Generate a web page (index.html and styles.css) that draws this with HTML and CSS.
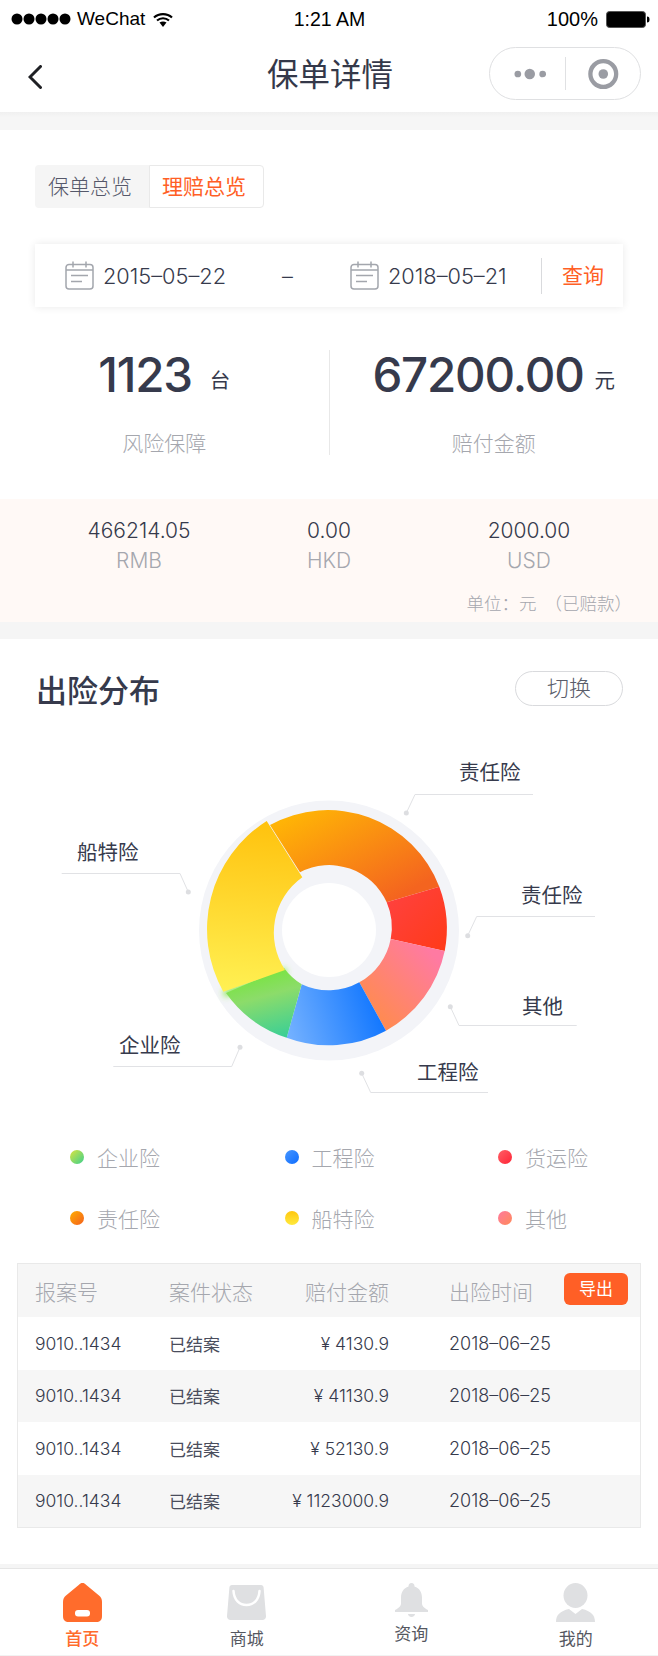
FILE: index.html
```html
<!DOCTYPE html>
<html lang="zh-CN">
<head>
	<meta charset="utf-8">
	<title>保单详情</title>
	<link rel="stylesheet" href="styles.css">
</head>
<body>

	<div class="status">
		<div class="status-left">
			<svg class="signal" width="60" height="12" viewBox="0 0 60 12"><circle cx="6" cy="6" r="5.5"/><circle cx="18" cy="6" r="5.5"/><circle cx="30" cy="6" r="5.5"/><circle cx="42" cy="6" r="5.5"/><circle cx="54" cy="6" r="5.5"/></svg>
			<span>WeChat</span>
			<svg class="wifi" width="20" height="15" viewBox="0 0 20 15"><path d="M1 5.5C6 1 14 1 19 5.5M4 8.5C7.500 5.500 12.500 5.500 16 8.500" fill="none" stroke="#000" stroke-width="2.200"/><path d="M6.500 10.500C8.500 9 11.500 9 13.500 10.500L10 15Z"/></svg>
		</div>
		<div class="status-time">1:21 AM</div>
		<div class="status-right">
			<span>100%</span>
			<svg width="44" height="17" viewBox="0 0 44 17"><rect x="0.500" y="0.500" width="39" height="16" rx="3" fill="#000" stroke="#555"/><path d="M41 5.500c2 0 2.500 1 2.500 3s-.5 3-2.500 3z"/></svg>
		</div>
	</div>

	<div class="nav">
		<svg class="back" width="14" height="24" viewBox="0 0 14 24"><path d="M12.500 1.500L2 12l10.500 10.500" fill="none" stroke="#1f2024" stroke-width="3" stroke-linecap="round"/></svg>
		<div class="nav-title">保单详情</div>
		<div class="capsule">
			<svg width="34" height="12" viewBox="0 0 34 12"><circle cx="4" cy="6" r="3.500"/><circle cx="16.500" cy="6" r="5.500"/><circle cx="30" cy="6" r="3.500"/></svg>
			<i class="capsule-line"></i>
			<svg width="32" height="32" viewBox="0 0 32 32"><circle cx="16" cy="16" r="13.500" fill="none" stroke="#9a9ca3" stroke-width="4.500"/><circle cx="16" cy="16" r="5"/></svg>
		</div>
	</div>

	<div class="gap gap-top"></div>

	<div class="overview">
		<div class="tabs">
			<div class="tab">保单总览</div>
			<div class="tab tab-on">理赔总览</div>
		</div>

		<div class="date-card">
			<div class="date-item date-from">
				<svg class="cal" width="29" height="29" viewBox="0 0 29 29"><use href="#calendar"/></svg>
				<span>2015–05–22</span>
			</div>
			<div class="date-dash">–</div>
			<div class="date-item date-to">
				<svg class="cal" width="29" height="29" viewBox="0 0 29 29"><use href="#calendar"/></svg>
				<span>2018–05–21</span>
			</div>
			<div class="date-query"><span>查询</span></div>
		</div>

		<div class="stats">
			<div class="stat stat-left">
				<div class="stat-num"><b>1123</b><span>台</span></div>
				<div class="stat-label">风险保障</div>
			</div>
			<div class="stat stat-right">
				<div class="stat-num"><b>67200.00</b><span>元</span></div>
				<div class="stat-label">赔付金额</div>
			</div>
		</div>
	</div>

	<div class="band">
		<div class="band-grid">
			<div class="band-cell"><div class="band-val">466214.05</div><div class="band-cur">RMB</div></div>
			<div class="band-cell"><div class="band-val">0.00</div><div class="band-cur">HKD</div></div>
			<div class="band-cell"><div class="band-val">2000.00</div><div class="band-cur">USD</div></div>
		</div>
		<div class="band-unit"><span>单位：元</span><span>（已赔款）</span></div>
	</div>

	<div class="gap gap-mid"></div>

	<div class="section-head">
		<h2>出险分布</h2>
		<div class="switch">切换</div>
	</div>

	<div class="chart">
		<svg class="pie" width="658" height="433" viewBox="0 706 658 433">
			<defs>
				<linearGradient id="gOrange" x1="0" y1="0" x2="1" y2="1"><stop offset="0.100" stop-color="#ffb306"/><stop offset="0.850" stop-color="#f4641f"/></linearGradient>
				<linearGradient id="gRed" x1="0" y1="0" x2="1" y2="1"><stop offset="0" stop-color="#ff4242"/><stop offset="1" stop-color="#ff3a18"/></linearGradient>
				<linearGradient id="gPink" x1="0" y1="1" x2="1" y2="0"><stop offset="0.200" stop-color="#ff8a54"/><stop offset="0.850" stop-color="#ff7aa2"/></linearGradient>
				<linearGradient id="gBlue" x1="0" y1="0.700" x2="1" y2="0.500"><stop offset="0" stop-color="#72b0ff"/><stop offset="1" stop-color="#0d74ff"/></linearGradient>
				<linearGradient id="gGreen" x1="0.400" y1="0" x2="0.700" y2="1"><stop offset="0" stop-color="#74e636"/><stop offset="0.400" stop-color="#8cdc6a"/><stop offset="1" stop-color="#3ccf95"/></linearGradient>
				<linearGradient id="gYellow" x1="0.500" y1="0" x2="0.450" y2="1"><stop offset="0" stop-color="#ffc20e"/><stop offset="1" stop-color="#fff052"/></linearGradient>
				<filter id="glow" x="-30%" y="-60%" width="160%" height="220%"><feGaussianBlur stdDeviation="3"/></filter>
				<symbol id="calendar" viewBox="0 0 29 29">
					<rect x="1" y="3.500" width="27" height="24.500" rx="3" fill="none" stroke="#a3a6ad" stroke-width="1.500"/>
					<path d="M8 0.500v6M21 0.500v6M1 9h27M6 14.500h17M6 20.500h11" fill="none" stroke="#a3a6ad" stroke-width="1.500"/>
				</symbol>
			</defs>

			<circle cx="329" cy="930.500" r="130" fill="#f3f4f8"/>
			<path d="M224 994L286 971" fill="none" stroke="#7be83a" stroke-width="6" filter="url(#glow)"/>
			<path d="M270 825A119.500 119.500 0 0 1 439.300 886.700L386.700 902.300A63 63 0 0 0 300 872.300Z" fill="url(#gOrange)"/>
			<path d="M439.300 886.700A119.500 119.500 0 0 1 444.700 951L390.700 939A63 63 0 0 0 386.700 902.300Z" fill="url(#gRed)"/>
			<path d="M444.700 951A119.500 119.500 0 0 1 386 1030.700L359.300 982.300A63 63 0 0 0 390.700 939Z" fill="url(#gPink)"/>
			<path d="M386 1030.700A119.500 119.500 0 0 1 286.700 1037.700L301.700 984.300A63 63 0 0 0 359.300 982.300Z" fill="url(#gBlue)"/>
			<path d="M286.700 1037.700A119.500 119.500 0 0 1 226 993L284 968A63 63 0 0 0 301.700 984.300Z" fill="url(#gGreen)"/>
			<path d="M223.300 991.700A128 128 0 0 1 266.700 821L302.300 877.300A68 68 0 0 0 285 970Z" fill="url(#gYellow)"/>
			<circle cx="329" cy="930" r="47" fill="#fff"/>

			<g fill="none" stroke="#e1e2e5" stroke-width="1">
				<path d="M533 794.500H415L406.300 813"/>
				<path d="M595 916.500H476.700L467.700 935.700"/>
				<path d="M576.700 1025.500H459L450.300 1006.700"/>
				<path d="M488 1092.500H370.700L361.700 1073.300"/>
				<path d="M61.700 873.500H180L188.300 892"/>
				<path d="M113.300 1066.500H231.700L240 1047.300"/>
			</g>
			<g fill="#dddee1">
				<circle cx="406.300" cy="813" r="2.500"/>
				<circle cx="467.700" cy="935.700" r="2.500"/>
				<circle cx="450.300" cy="1006.700" r="2.500"/>
				<circle cx="361.700" cy="1073.300" r="2.500"/>
				<circle cx="188.300" cy="892" r="2.500"/>
				<circle cx="240" cy="1047.300" r="2.500"/>
			</g>
		</svg>
		<span class="pin pin-a">责任险</span>
		<span class="pin pin-b">责任险</span>
		<span class="pin pin-c">其他</span>
		<span class="pin pin-d">工程险</span>
		<span class="pin pin-e">船特险</span>
		<span class="pin pin-f">企业险</span>
	</div>

	<div class="legend">
		<div class="legend-item"><i class="dot dot-green"></i>企业险</div>
		<div class="legend-item"><i class="dot dot-blue"></i>工程险</div>
		<div class="legend-item"><i class="dot dot-red"></i>货运险</div>
		<div class="legend-item"><i class="dot dot-orange"></i>责任险</div>
		<div class="legend-item"><i class="dot dot-yellow"></i>船特险</div>
		<div class="legend-item"><i class="dot dot-pink"></i>其他</div>
	</div>

	<div class="table">
		<div class="row row-head">
			<div>报案号</div>
			<div>案件状态</div>
			<div class="money">赔付金额</div>
			<div class="when">出险时间<span class="export">导出</span></div>
		</div>
		<div class="row">
			<div class="no">9010..1434</div>
			<div class="state">已结案</div>
			<div class="money amount">¥ 4130.9</div>
			<div class="when">2018–06–25</div>
		</div>
		<div class="row row-alt">
			<div class="no">9010..1434</div>
			<div class="state">已结案</div>
			<div class="money amount">¥ 41130.9</div>
			<div class="when">2018–06–25</div>
		</div>
		<div class="row">
			<div class="no">9010..1434</div>
			<div class="state">已结案</div>
			<div class="money amount">¥ 52130.9</div>
			<div class="when">2018–06–25</div>
		</div>
		<div class="row row-alt">
			<div class="no">9010..1434</div>
			<div class="state">已结案</div>
			<div class="money amount">¥ 1123000.9</div>
			<div class="when">2018–06–25</div>
		</div>
	</div>

	<div class="gap gap-bottom"></div>

	<div class="tabbar">
		<div class="tabbar-item tabbar-on">
			<svg width="39" height="39" viewBox="0 0 39 39"><path d="M19.500 0c1.500 0 2.500.7 3.500 1.700L36 12.500c2 1.700 3 3.500 3 6.500v14c0 4-2 6-6 6H6c-4 0-6-2-6-6V19c0-3 1-4.800 3-6.500L16 1.700C17 .7 18 0 19.500 0z" fill="#ff6c2c"/><rect x="12" y="27" width="15" height="6.500" rx="3" fill="#fff"/></svg>
			<span>首页</span>
		</div>
		<div class="tabbar-item tabbar-shop">
			<svg width="39" height="35" viewBox="0 0 39 35"><path d="M5 0h29c1.500 0 2.500 1 2.600 2.500L39 31c.1 2.500-1.400 4-3.500 4h-32C1.400 35-.1 33.500 0 31L2.400 2.500C2.500 1 3.500 0 5 0z" fill="#dfe0e2"/><path d="M6.500 6c.5 9 6 14 13 14s12.500-5 13-14" fill="none" stroke="#fff" stroke-width="2.500" stroke-linecap="round"/></svg>
			<span>商城</span>
		</div>
		<div class="tabbar-item">
			<svg width="33" height="34" viewBox="0 0 33 34"><path d="M16.500 0c2 0 3 1.500 3 3.500 5 1.500 7.500 6 7.500 11v6c0 3 3 5 6 6.500v2H0v-2c3-1.500 6-3.500 6-6.500v-6c0-5 2.500-9.500 7.500-11 0-2 1-3.500 3-3.500z" fill="#dfe0e2"/><path d="M13 31h7c0 1.500-1.500 3-3.500 3S13 32.500 13 31z" fill="#dfe0e2"/></svg>
			<span>资询</span>
		</div>
		<div class="tabbar-item">
			<svg width="39" height="39" viewBox="0 0 39 39"><ellipse cx="19.500" cy="12.500" rx="12" ry="12.500" fill="#dfe0e2"/><path d="M0 39c0-7 4-11 13-13l6.500 5 6.500-5c9 2 13 6 13 13z" fill="#dfe0e2"/></svg>
			<span>我的</span>
		</div>
	</div>

</body>
</html>
```

FILE: styles.css
```css
* {
	box-sizing: border-box;
}

html {
	overflow-x: hidden;
}

body {
	margin: 0;
	padding: 0;
	width: 658px;
	background: #fff;
	color: #363a4c;
	font-family: Inter, "Noto Sans CJK SC", sans-serif;
	font-size: 20.5px;
	font-weight: 300;
}

.gap {
	background: #f5f5f5;
}
.gap-top {
	height: 18px;
	background: linear-gradient(#f0f0f0, #f6f6f6 30%);
}
.gap-mid {
	height: 17px;
}
.gap-bottom {
	height: 5px;
	margin-top: 36px;
	border-bottom: 1px solid #e6e6e6;
}

/* status bar */
.status {
	display: grid;
	grid-template-columns: 1fr auto 1fr;
	align-items: center;
	height: 40px;
	padding: 0 8px 2px 11px;
	color: #000;
	font-family: "Liberation Sans", sans-serif;
	font-size: 19px;
	font-weight: 400;
}
.status-left {
	display: flex;
	align-items: center;
}
.signal {
	margin-right: 6px;
}
.wifi {
	margin-left: 8px;
}
.status-time {
	font-size: 19.5px;
	margin-left: -2px;
}
.status-right {
	display: flex;
	justify-content: flex-end;
	align-items: center;
	gap: 8px;
	font-size: 20px;
}

/* nav */
.nav {
	display: grid;
	grid-template-columns: 1fr auto 1fr;
	align-items: center;
	height: 72px;
	padding: 0 17px 0 19px;
}
.back {
	margin-left: 9px;
	margin-top: 1px;
}
.nav-title {
	margin-top: -2px;
	font-size: 31.5px;
	line-height: 38px;
	font-weight: 400;
	color: #343849;
}
.capsule {
	justify-self: end;
	display: flex;
	align-items: center;
	width: 152px;
	height: 53px;
	padding: 0 21px 0 24px;
	border: 1px solid #dfe0e2;
	border-radius: 27px;
	margin-top: -5px;
	fill: #9a9ca3;
}
.capsule-line {
	width: 1px;
	height: 33px;
	margin: 0 22px 0 19px;
	background: #e0e1e3;
}

/* overview */
.overview {
	padding: 35px 35px 44px;
}
.tabs {
	display: flex;
	width: 229px;
	height: 43px;
}
.tab {
	width: 114px;
	padding-left: 13px;
	line-height: 43px;
	font-size: 21px;
	color: #55586a;
	background: #f5f5f5;
	border-radius: 4px 0 0 4px;
}
.tab-on {
	width: 115px;
	padding-left: 12px;
	line-height: 41px;
	font-weight: 400;
	color: #ff5f26;
	background: #fff;
	border: 1px solid #e9e9e9;
	border-radius: 0 4px 4px 0;
}

.date-card {
	display: flex;
	align-items: center;
	height: 63px;
	margin-top: 36px;
	padding-left: 30px;
	background: #fff;
	box-shadow: 0 0 8px rgba(0, 0, 0, .09);
	font-size: 21.75px;
}
.date-item {
	display: flex;
	align-items: center;
	gap: 9px;
}
.date-from {
	width: 217px;
}
.date-to {
	width: 191px;
}
.date-dash {
	width: 68px;
}
.date-query {
	flex: 1;
	height: 36px;
	padding-left: 20px;
	line-height: 36px;
	font-weight: 400;
	color: #ff5f26;
	font-size: 21px;
	border-left: 1px solid #d9dadd;
}

.stats {
	display: flex;
	height: 105px;
	margin: 43px -35px 0;
}
.stat {
	flex: 1;
	text-align: center;
}
.stat-left {
	border-right: 1px solid #e8e8e8;
}
.stat-num {
	display: flex;
	justify-content: center;
	align-items: flex-end;
	gap: 18px;
	height: 49px;
	line-height: 49px;
}
.stat-right .stat-num {
	gap: 11px;
}
.stat-num b {
	font-size: 47.5px;
	font-weight: 500;
	letter-spacing: -1.2px;
}
.stat-num span {
	margin-bottom: 7px;
	font-size: 20.5px;
	line-height: 22px;
	font-weight: 400;
}
.stat-label {
	margin-top: 34px;
	line-height: 22px;
	font-size: 21px;
	color: #a5a7ae;
}

/* currency band */
.band {
	height: 123px;
	padding-top: 21px;
	background: #fff9f6;
	font-size: 21px;
}
.band-grid {
	display: grid;
	grid-template-columns: 220px 160px 240px;
	padding-left: 29px;
	text-align: center;
}
.band-val {
	line-height: 22px;
}
.band-cur {
	margin-top: 8px;
	line-height: 22px;
	color: #a5a7ae;
}
.band-unit {
	display: flex;
	justify-content: flex-end;
	gap: 8px;
	margin-top: 22px;
	padding-right: 26px;
	line-height: 20px;
	font-size: 17.5px;
	color: #a5a7ae;
}

/* chart */
.section-head {
	display: flex;
	justify-content: space-between;
	align-items: center;
	height: 67px;
	padding: 32px 35px 0 36px;
}
.section-head h2 {
	margin: 4px 0 0;
	font-size: 31px;
	font-weight: 500;
	line-height: 35px;
}
.switch {
	width: 108px;
	height: 35px;
	line-height: 33px;
	text-align: center;
	font-size: 22px;
	color: #5a5d6a;
	border: 1px solid #d9dadd;
	border-radius: 18px;
}

.chart {
	position: relative;
	height: 433px;
}
.pie {
	display: block;
}
.pin {
	position: absolute;
	line-height: 28px;
	font-size: 20.5px;
	font-weight: 400;
	white-space: nowrap;
}
.pin-a { left: 459px; top: 53px; }
.pin-b { left: 521px; top: 176px; }
.pin-c { left: 522px; top: 287px; }
.pin-d { left: 417px; top: 353px; }
.pin-e { left: 77px; top: 133px; }
.pin-f { left: 119px; top: 326px; }

.legend {
	display: grid;
	grid-template-columns: 214.5px 213.5px 1fr;
	grid-auto-rows: 36px;
	row-gap: 25px;
	padding-left: 70px;
}
.legend-item {
	display: flex;
	align-items: center;
	gap: 13px;
	font-size: 21px;
	color: #a5a7ae;
}
.dot {
	width: 14px;
	height: 14px;
	border-radius: 50%;
}
.dot-green { background: linear-gradient(135deg, #dbe43f, #3bd08e); }
.dot-blue { background: linear-gradient(135deg, #4696ff, #0e6dff); }
.dot-red { background: linear-gradient(135deg, #ff5f66, #ff2436); }
.dot-orange { background: linear-gradient(135deg, #ffae00, #f4601e); }
.dot-yellow { background: linear-gradient(#ffc70f, #ffe93e); }
.dot-pink { background: linear-gradient(135deg, #ff7a9e, #ff8a58); }

/* table */
.table {
	margin: 27px 17px 0;
	border: 1px solid #e9e9e9;
}
.row {
	display: grid;
	grid-template-columns: 134px 131px 89px 1fr;
	align-items: center;
	height: 52.5px;
	padding-left: 17px;
	font-size: 18px;
}
.row-alt {
	background: #f6f6f6;
}
.row-head {
	height: 53px;
	background: #f6f6f6;
	font-size: 21px;
	color: #a5a7ae;
}
.no {
	font-size: 17.5px;
}
.state {
	font-size: 17px;
	font-weight: 400;
	color: #4a4d5c;
}
.money {
	justify-self: end;
	white-space: nowrap;
}
.amount {
	font-size: 17.5px;
}
.when {
	display: flex;
	align-items: center;
	justify-content: space-between;
	padding: 0 12px 0 60px;
	white-space: nowrap;
}
.export {
	width: 64px;
	height: 32px;
	margin-top: -3px;
	line-height: 32px;
	text-align: center;
	font-size: 17px;
	font-weight: 400;
	color: #fff;
	background: #ff5f26;
	border-radius: 6px;
}

/* bottom tabs */
.tabbar {
	display: flex;
	height: 88px;
	border-bottom: 2px solid #f2f2f2;
}
.tabbar-item {
	flex: 1;
	display: flex;
	flex-direction: column;
	align-items: center;
	gap: 6px;
	padding-top: 14px;
	font-size: 17px;
	font-weight: 400;
	line-height: 22px;
	color: #55575f;
}
.tabbar-shop {
	padding-top: 16px;
	gap: 8px;
}
.tabbar-on {
	font-weight: 500;
	color: #ff6c2c;
}
```
